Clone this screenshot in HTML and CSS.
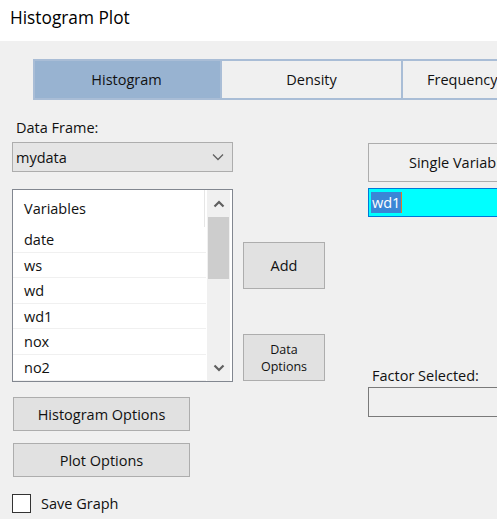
FILE: index.html
```html
<!DOCTYPE html>
<html>
<head>
<meta charset="utf-8">
<link rel="stylesheet" href="styles.css">
</head>
<body>
<div class="titlebar">Histogram Plot</div>
<div class="client">
  <div class="tabs">
    <div class="tab active">Histogram</div>
    <div class="tab density">Density</div>
    <div class="tab freq">Frequency</div>
  </div>
  <div class="main">
    <div class="leftcol">
      <div class="label df">Data Frame:</div>
      <div class="combo">
        <span>mydata</span>
        <svg class="chev" width="12" height="8" viewBox="0 0 12 8"><path d="M1 1.5 L6 6.5 L11 1.5" fill="none" stroke="#606060" stroke-width="1.3"/></svg>
      </div>
      <div class="listbox">
        <div class="listcontent">
          <div class="lhead"><span>Variables</span></div>
          <div class="row">date</div>
          <div class="row">ws</div>
          <div class="row">wd</div>
          <div class="row">wd1</div>
          <div class="row">nox</div>
          <div class="row">no2</div>
        </div>
        <div class="vscroll">
          <div class="sarrow"><svg width="12" height="8" viewBox="0 0 12 8"><path d="M1.5 6.5 L6 2 L10.5 6.5" fill="none" stroke="#606060" stroke-width="2.2"/></svg></div>
          <div class="thumb"></div>
          <div class="track"></div>
          <div class="sarrow"><svg width="12" height="8" viewBox="0 0 12 8"><path d="M1.5 1.5 L6 6 L10.5 1.5" fill="none" stroke="#606060" stroke-width="2.2"/></svg></div>
        </div>
      </div>
      <button class="btn wide hopt">Histogram Options</button>
      <button class="btn wide popt">Plot Options</button>
      <label class="check"><span class="box"></span><span>Save Graph</span></label>
    </div>
    <div class="midcol">
      <button class="btn mid add">Add</button>
      <button class="btn mid small dopt">Data<br>Options</button>
    </div>
    <div class="rightcol">
      <button class="btn single">Single Variable</button>
      <div class="textbox"><span class="sel">wd1</span><span class="caret"></span></div>
      <div class="label factor">Factor Selected:</div>
      <div class="factorbox"></div>
    </div>
  </div>
</div>
</body>
</html>
```
FILE: styles.css
```css
html, body {
  margin: 0;
  padding: 0;
  width: 497px;
  height: 519px;
  overflow: hidden;
  background: #f0f0f0;
  font-family: "Open Sans", "Noto Sans", sans-serif;
  font-size: 14.5px;
  color: #111;
}
.titlebar {
  height: 41px;
  background: #ffffff;
  box-sizing: border-box;
  padding: 6px 0 0 10px;
  font-size: 17.3px;
  color: #000;
}
.client {
  background: #f0f0f0;
}
.tabs {
  display: flex;
  margin: 18px 0 0 33px;
  height: 41px;
  width: 600px;
}
.tab {
  box-sizing: border-box;
  height: 41px;
  display: flex;
  align-items: center;
  justify-content: center;
  border: 2px solid #a9bdd6;
  background: #f0f0f0;
  color: #111;
}
.tab.active {
  width: 187px;
  background: #98b3d1;
  border-color: #a9bdd6;
  border-right: none;
  padding-right: 2px;
}
.tab.density {
  width: 183px;
  border-right: 2px solid #a9bdd6;
}
.tab.freq {
  width: 200px;
  border-left: none;
  justify-content: flex-start;
  padding-left: 24px;
}
.main {
  display: flex;
  padding-left: 12px;
}
.leftcol {
  width: 221px;
  display: flex;
  flex-direction: column;
  align-items: flex-start;
}
.label {
  line-height: 20px;
}
.df {
  margin-top: 18px;
  padding-left: 4px;
}
.combo {
  margin-top: 4px;
  box-sizing: border-box;
  width: 221px;
  height: 30px;
  border: 1px solid #adadad;
  background: #e5e5e5;
  display: flex;
  align-items: center;
  justify-content: space-between;
  padding: 0 8px 0 3px;
}
.listbox {
  margin-top: 17px;
  box-sizing: border-box;
  width: 221px;
  height: 193px;
  border: 1px solid #828790;
  background: #fff;
  display: flex;
}
.listcontent {
  width: 193px;
}
.lhead {
  height: 37px;
  box-sizing: border-box;
  border-right: 1px solid #e6e6e6;
  display: flex;
  align-items: center;
  padding-left: 11px;
  margin-right: 1px;
}
.row {
  height: 25.6px;
  box-sizing: border-box;
  padding-left: 11px;
  padding-top: 1px;
  line-height: 24px;
  border-bottom: 1px solid #f0f0f0;
}
.vscroll {
  width: 23px;
  margin-left: 1px;
  background: #f0f0f0;
  display: flex;
  flex-direction: column;
}
.sarrow {
  height: 27px;
  display: flex;
  align-items: center;
  justify-content: center;
}
.thumb {
  height: 62px;
  background: #cdcdcd;
  margin: 0 1px;
}
.track {
  flex: 1;
}
.btn {
  font-family: inherit;
  font-size: 14.5px;
  color: #111;
  background: #e1e1e1;
  border: 1px solid #adadad;
  box-sizing: border-box;
  padding: 0;
}
.wide {
  width: 177px;
  height: 34px;
  margin-left: 1px;
}
.hopt { margin-top: 15px; }
.popt { margin-top: 12px; }
.check {
  display: flex;
  align-items: center;
  margin-top: 17px;
  gap: 10px;
}
.box {
  width: 19px;
  height: 19px;
  box-sizing: border-box;
  border: 1px solid #333;
  background: #fff;
}
.midcol {
  margin-left: 10px;
  width: 82px;
  display: flex;
  flex-direction: column;
}
.mid {
  width: 82px;
}
.add {
  margin-top: 142px;
  height: 47px;
}
.dopt {
  margin-top: 45px;
  height: 47px;
  font-size: 12.5px;
  line-height: 17px;
}
.rightcol {
  margin-left: 43px;
  width: 200px;
  display: flex;
  flex-direction: column;
  flex-shrink: 0;
}
.single {
  margin-top: 43px;
  height: 39px;
  background: #f0f0f0;
  text-align: left;
  padding-left: 40px;
  white-space: nowrap;
}
.textbox {
  margin-top: 6px;
  height: 29px;
  box-sizing: border-box;
  border: 1px solid #0078d7;
  background: #00ffff;
  display: flex;
  align-items: center;
  padding-left: 2px;
}
.sel {
  background: #3a86d6;
  color: #fff;
  line-height: 21px;
  padding: 0 1px;
}
.caret {
  width: 1px;
  height: 21px;
  background: #e07b2a;
}
.factor {
  margin-top: 149px;
  padding-left: 4px;
}
.factorbox {
  margin-top: 1px;
  height: 30px;
  box-sizing: border-box;
  border: 1px solid #7a7a7a;
  background: #f0f0f0;
}
```
